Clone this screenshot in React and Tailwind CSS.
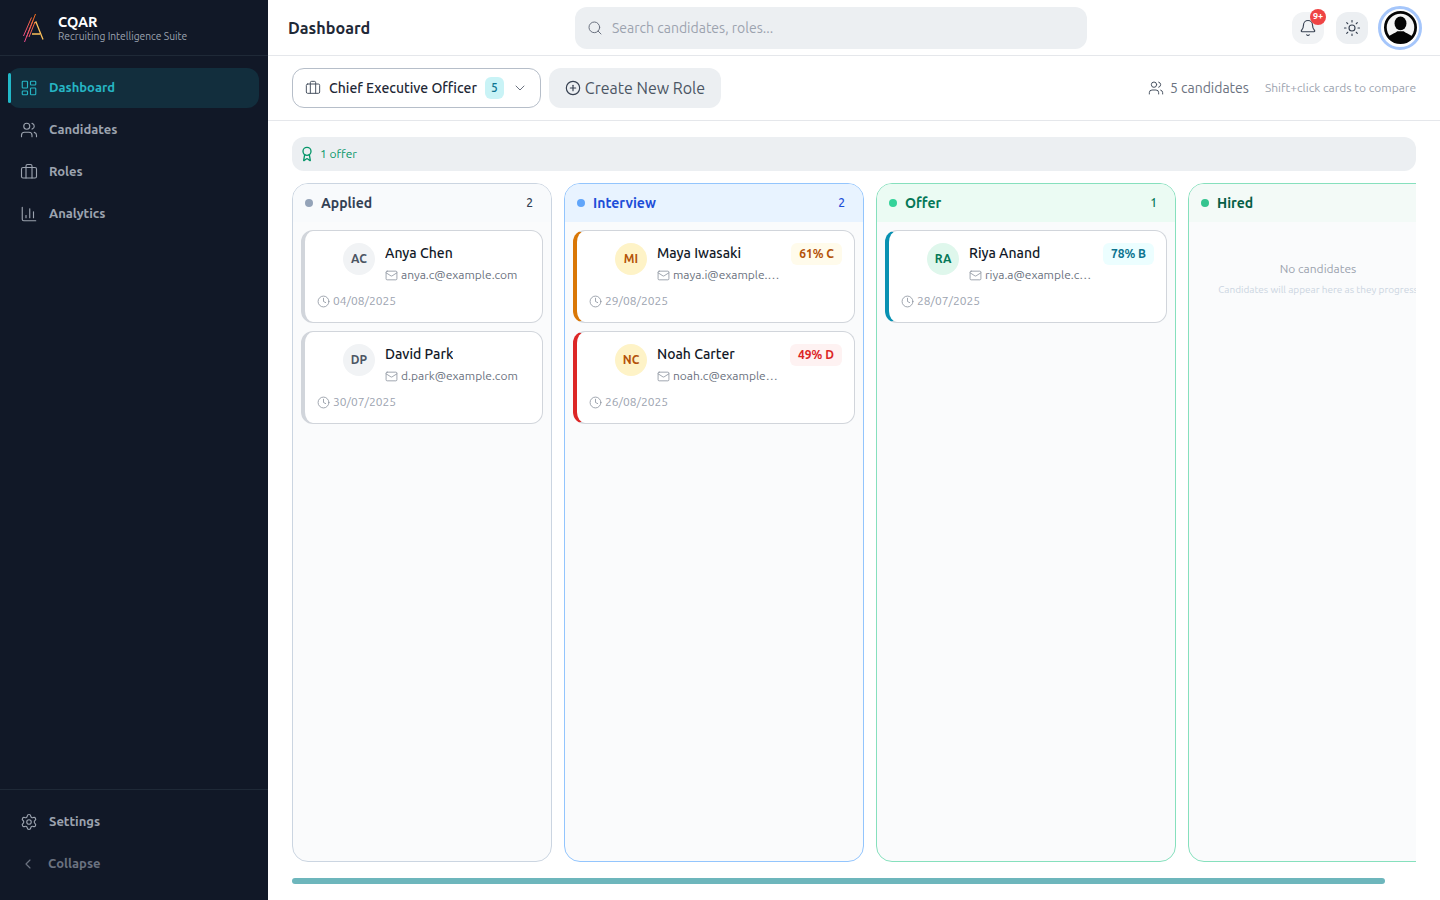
import {
  Award,
  Bell,
  Briefcase,
  ChartColumn,
  ChevronDown,
  ChevronLeft,
  CirclePlus,
  Clock,
  LayoutDashboard,
  Mail,
  Search,
  Settings,
  Sun,
  Users,
} from "lucide-react";

const navItems = [
  { label: "Dashboard", icon: LayoutDashboard, active: true },
  { label: "Candidates", icon: Users },
  { label: "Roles", icon: Briefcase },
  { label: "Analytics", icon: ChartColumn },
];

const columns = [
  {
    title: "Applied",
    count: 2,
    width: "w-[260px]",
    border: "border-[#cbd5e1]",
    header: "bg-[#f8fafc]",
    dot: "bg-[#94a3b8]",
    text: "text-[#334155]",
    countText: "text-[#334155]",
    cards: [
      {
        initials: "AC",
        name: "Anya Chen",
        email: "anya.c@example.com",
        date: "04/08/2025",
        accent: "border-l-[#d1d5db]",
        avatar: "bg-[#f1f3f5] text-[#4b5563]",
      },
      {
        initials: "DP",
        name: "David Park",
        email: "d.park@example.com",
        date: "30/07/2025",
        accent: "border-l-[#d1d5db]",
        avatar: "bg-[#f1f3f5] text-[#4b5563]",
      },
    ],
  },
  {
    title: "Interview",
    count: 2,
    width: "w-[300px]",
    border: "border-[#93c5fd]",
    header: "bg-[#e8f3ff]",
    dot: "bg-[#60a5fa]",
    text: "text-[#1d4ed8]",
    countText: "text-[#1d4ed8]",
    cards: [
      {
        initials: "MI",
        name: "Maya Iwasaki",
        email: "maya.i@example.com",
        date: "29/08/2025",
        accent: "border-l-[#d97706]",
        avatar: "bg-[#fef3c7] text-[#b45309]",
        score: "61% C",
        scoreStyle: "bg-[#fffbeb] text-[#b45309]",
      },
      {
        initials: "NC",
        name: "Noah Carter",
        email: "noah.c@example.com",
        date: "26/08/2025",
        accent: "border-l-[#dc2626]",
        avatar: "bg-[#fef3c7] text-[#b45309]",
        score: "49% D",
        scoreStyle: "bg-[#fef2f2] text-[#dc2626]",
      },
    ],
  },
  {
    title: "Offer",
    count: 1,
    width: "w-[300px]",
    border: "border-[#86e0bd]",
    header: "bg-[#ebfbf3]",
    dot: "bg-[#34d399]",
    text: "text-[#047857]",
    countText: "text-[#047857]",
    cards: [
      {
        initials: "RA",
        name: "Riya Anand",
        email: "riya.a@example.com",
        date: "28/07/2025",
        accent: "border-l-[#0891b2]",
        avatar: "bg-[#dff7ec] text-[#047857]",
        score: "78% B",
        scoreStyle: "bg-[#ecfeff] text-[#0e7490]",
      },
    ],
  },
  {
    title: "Hired",
    width: "w-[260px]",
    border: "border-[#86e0bd]",
    header: "bg-[#f3faf7]",
    dot: "bg-[#34c48f]",
    text: "text-[#065f46]",
    cards: [],
  },
];

const Logo = () => (
  <svg width="24" height="30" viewBox="0 0 24 30" fill="none" className="shrink-0">
    <defs>
      <linearGradient id="hatch" x1="0" y1="1" x2="1" y2="0">
        <stop offset="0" stopColor="#ec4899" />
        <stop offset="1" stopColor="#f97316" />
      </linearGradient>
    </defs>
    <path d="M11.5 10 L13 9 L20 26.5 M9 21 H17" stroke="#fbbf5a" strokeWidth="1.3" />
    <path
      d="M1.5 29 L12.5 1 M0.5 23 L8.5 4.5 M3.5 24 L10 7.5 M6 24 L12 9"
      stroke="url(#hatch)"
      strokeWidth="1"
    />
  </svg>
);

const Sidebar = () => (
  <aside className="w-[268px] h-full shrink-0 flex flex-col bg-[#111827]">
    <div className="h-14 flex items-center gap-[11px] pl-[23px] border-b border-[#1f2937]">
      <Logo />
      <div className="pt-[2px] flex flex-col">
        <span className="text-[14.4px] leading-[15px] font-bold text-white">CQAR</span>
        <span className="text-[10.25px] leading-[13px] text-[#9ca3af]">Recruiting Intelligence Suite</span>
      </div>
    </div>
    <nav className="flex-1 px-2 pt-3 flex flex-col gap-[2px]">
      {navItems.map(({ label, icon: Icon, active }) => (
        <div
          key={label}
          className={`relative h-10 flex items-center gap-[11px] pl-3 rounded-xl text-[13px] font-semibold ${
            active ? "w-[251px] bg-[#122e3d] text-[#26b5c4]" : "text-[#9ca3af]"
          }`}
        >
          {active && <span className="absolute left-0 top-[5px] w-[3px] h-[30px] rounded-full bg-[#22b8c8]" />}
          <Icon size={18} strokeWidth={1.5} />
          {label}
        </div>
      ))}
    </nav>
    <div className="border-t border-[#1f2937] px-2 pt-3 pb-4 flex flex-col gap-[2px]">
      <div className="h-10 flex items-center gap-[11px] pl-3 text-[13px] font-semibold text-[#9ca3af]">
        <Settings size={18} strokeWidth={1.5} />
        Settings
      </div>
      <div className="h-10 flex items-center gap-3 pl-3 text-[13px] font-semibold text-[#6b7280]">
        <ChevronLeft size={16} strokeWidth={1.75} />
        Collapse
      </div>
    </div>
  </aside>
);

const Header = () => (
  <header className="h-14 shrink-0 flex items-center pl-5 pr-[18px] border-b border-[#e5e7eb]">
    <h1 className="w-[287px] pt-px text-[16.2px] font-bold text-[#1f2937]">Dashboard</h1>
    <div className="w-[512px] h-[42px] flex items-center gap-[9px] px-3 rounded-xl bg-[#eceff2] text-sm text-[#9ca3af]">
      <Search size={16} strokeWidth={1.5} className="text-[#6b7280]" />
      Search candidates, roles...
    </div>
    <div className="ml-auto flex items-center">
      <div className="relative w-8 h-8 flex items-center justify-center rounded-xl bg-[#f1f3f5] text-[#374151]">
        <Bell size={18} strokeWidth={1.5} />
        <span className="absolute -top-[3px] -right-[2px] w-4 h-4 flex items-center justify-center rounded-full bg-[#ef4444] text-[9px] font-bold text-white">
          9+
        </span>
      </div>
      <div className="ml-3 w-8 h-8 flex items-center justify-center rounded-xl bg-[#eceff2] text-[#374151]">
        <Sun size={18} strokeWidth={1.5} />
      </div>
      <div className="ml-[10px] w-11 h-11 flex items-center justify-center rounded-full border-[3px] border-[#a5c6fb] bg-white">
        <svg width="33" height="33" viewBox="0 0 36 36">
          <circle cx="18" cy="18" r="16.5" fill="#f5f5f5" stroke="#050505" strokeWidth="3" />
          <ellipse cx="18" cy="13.5" rx="6.5" ry="7.5" fill="#050505" />
          <path d="M4 29 C7 25 12 24.5 14.5 22 H21.5 C24 24.5 29 25 32 29 C28 33 23 35 18 35 C13 35 8 33 4 29 Z" fill="#050505" />
        </svg>
      </div>
    </div>
  </header>
);

const Toolbar = () => (
  <div className="h-[65px] shrink-0 flex items-center px-6 border-b border-[#e5e7eb]">
    <div className="w-[249px] h-10 flex items-center pl-3 pr-3 rounded-xl border border-[#b6bec9] bg-white">
      <Briefcase size={16} strokeWidth={1.5} className="text-[#4b5563]" />
      <span className="ml-2 text-sm font-medium text-[#1f2937]">Chief Executive Officer</span>
      <span className="ml-2 w-[19px] h-[22px] flex items-center justify-center rounded-md bg-[#c9f3f6] text-xs font-medium text-[#0e7490]">
        5
      </span>
      <ChevronDown size={16} strokeWidth={1.5} className="ml-auto text-[#6b7280]" />
    </div>
    <div className="ml-2 w-[172px] h-10 flex items-center justify-center gap-1 rounded-xl bg-[#eceff2] text-base text-[#4b5563]">
      <CirclePlus size={16} strokeWidth={1.75} className="text-[#374151]" />
      Create New Role
    </div>
    <div className="ml-auto flex items-center gap-4">
      <div className="flex items-center gap-[6px] text-sm text-[#6b7280]">
        <Users size={16} strokeWidth={1.5} className="text-[#4b5563]" />
        5 candidates
      </div>
      <span className="text-xs text-[#9ca3af]">Shift+click cards to compare</span>
    </div>
  </div>
);

const CandidateCard = ({ card }) => (
  <div className={`h-[93px] shrink-0 rounded-xl border border-[#d1d5db] border-l-4 ${card.accent} bg-white pt-3 pl-3 pr-3`}>
    <div className="flex items-start">
      <div className={`ml-[26px] w-8 h-8 shrink-0 flex items-center justify-center rounded-full text-xs font-bold ${card.avatar}`}>
        {card.initials}
      </div>
      <div className="ml-[10px] flex-1 min-w-0">
        <div className="h-5 flex items-start justify-between gap-2">
          <span className="text-sm leading-5 font-medium text-[#111827] truncate">{card.name}</span>
          {card.score && (
            <span className={`shrink-0 h-[22px] px-2 flex items-center rounded-md text-xs font-semibold ${card.scoreStyle}`}>
              {card.score}
            </span>
          )}
        </div>
        <div className="mt-[2px] flex items-center gap-[3px] text-xs leading-5 text-[#6b7280]">
          <Mail size={13} strokeWidth={1.5} className="shrink-0 text-[#8b929e]" />
          <span className={`truncate ${card.score ? "max-w-[107px]" : ""}`}>{card.email}</span>
        </div>
      </div>
    </div>
    <div className="mt-[6px] flex items-center gap-[3px] text-xs leading-5 text-[#9ca3af]">
      <Clock size={13} strokeWidth={1.5} className="shrink-0 text-[#8b929e]" />
      {card.date}
    </div>
  </div>
);

const Column = ({ column }) => (
  <div className={`${column.width} h-full shrink-0 flex flex-col rounded-2xl border ${column.border} bg-[#fafbfc] overflow-hidden`}>
    <div className={`h-[38px] shrink-0 flex items-center pl-3 pr-[18px] ${column.header}`}>
      <span className={`w-2 h-2 rounded-full ${column.dot}`} />
      <span className={`ml-2 text-sm font-bold ${column.text}`}>{column.title}</span>
      {column.count && <span className={`ml-auto text-xs font-medium ${column.countText}`}>{column.count}</span>}
    </div>
    {column.cards.length > 0 ? (
      <div className="flex flex-col gap-2 p-2">
        {column.cards.map((card) => (
          <CandidateCard key={card.initials} card={card} />
        ))}
      </div>
    ) : (
      <div className="pt-[39px] flex flex-col items-center text-center">
        <span className="text-xs leading-4 text-[#9ca3af]">No candidates</span>
        <span className="mt-[5px] text-[10px] leading-4 text-[#cbd5e1] whitespace-nowrap">
          Candidates will appear here as they progress
        </span>
      </div>
    )}
  </div>
);

export default function App() {
  return (
    <div className="w-[1440px] h-[900px] flex overflow-hidden bg-white font-['Ubuntu','Noto_Sans',sans-serif]">
      <Sidebar />
      <main className="flex-1 min-w-0 flex flex-col">
        <Header />
        <Toolbar />
        <div className="flex-1 min-h-0 flex flex-col px-6 pt-4">
          <div className="h-[34px] shrink-0 flex items-center gap-[5px] pl-[7px] rounded-xl bg-[#eceff2] text-xs text-[#059669]">
            <Award size={16} strokeWidth={2} />
            1 offer
          </div>
          <div className="mt-3 h-[679px] shrink-0 flex gap-3 overflow-hidden">
            {columns.map((column) => (
              <Column key={column.title} column={column} />
            ))}
          </div>
          <div className="mt-4 w-[1093px] h-[6px] rounded-full bg-[#6db6bc]" />
        </div>
      </main>
    </div>
  );
}
